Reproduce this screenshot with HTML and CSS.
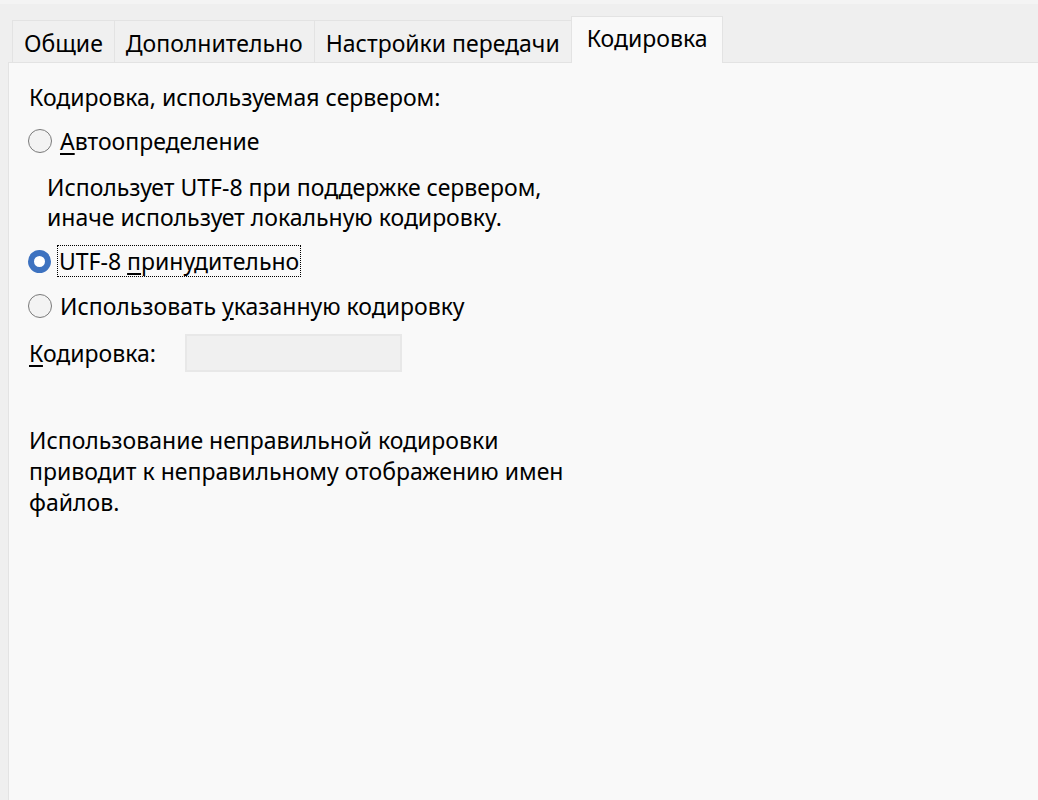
FILE: index.html
```html
<!DOCTYPE html>
<html lang="ru">
<head>
    <meta charset="UTF-8">
    <title>Кодировка</title>
    <link rel="stylesheet" href="styles.css">
</head>
<body>
    <div class="okno">
        <div class="vkladki">
            <div class="vkladka">Общие</div>
            <div class="vkladka">Дополнительно</div>
            <div class="vkladka">Настройки передачи</div>
            <div class="vkladka aktivna">Кодировка</div>
        </div>

        <div class="panel">
            <div class="zagolovok">Кодировка, используемая сервером:</div>

            <label class="radio">
                <span class="krug"></span>
                <span class="tekst"><u>А</u>втоопределение</span>
            </label>
            <div class="opisanie">
                Использует UTF-8 при поддержке сервером,<br>
                иначе использует локальную кодировку.
            </div>

            <label class="radio">
                <span class="krug vybran"></span>
                <span class="tekst fokus">UTF-8 <u>п</u>ринудительно</span>
            </label>

            <label class="radio">
                <span class="krug"></span>
                <span class="tekst">Использовать <u>у</u>казанную кодировку</span>
            </label>

            <div class="stroka">
                <span class="metka"><u>К</u>одировка:</span>
                <div class="pole"></div>
            </div>

            <p class="zamechanie">
                Использование неправильной кодировки<br>
                приводит к неправильному отображению имен<br>
                файлов.
            </p>
        </div>
    </div>
</body>
</html>
```

FILE: styles.css
```css
:root {
    --ramka: #e3e3e3;
    --fon: #efefef;
    --panel: #f9f9f9;
    --text: #000;
    --siniy: #3d72c0;
}

html, body {
    height: 100%;
}

body {
    margin: 0;
    font-family: 'Noto Sans', 'Open Sans', sans-serif;
    font-size: 23px;
    color: var(--text);
    background: var(--fon);
    border-top: 4px solid #f4f4f4;
    box-sizing: border-box;
}

.okno {
    display: flex;
    flex-direction: column;
    height: 100%;
}

.vkladki {
    display: flex;
    align-items: flex-end;
    height: 58px;
    padding-left: 12px;
}

.vkladka {
    height: 41px;
    line-height: 44px;
    padding: 0 11px;
    background: #f0f0f0;
    border: 1px solid var(--ramka);
    border-bottom: none;
    margin-right: -1px;
}

.vkladka.aktivna {
    height: 46px;
    line-height: 42px;
    padding: 0 15px;
    background: var(--panel);
    margin-bottom: -1px;
    position: relative;
    z-index: 1;
}

.panel {
    flex: 1;
    margin-left: 8px;
    background: var(--panel);
    border-top: 1px solid var(--ramka);
    border-left: 1px solid var(--ramka);
    padding: 19px 20px 0;
    line-height: 30px;
}

.radio {
    display: flex;
    align-items: center;
    gap: 6px;
    margin-top: 13px;
    margin-left: -1px;
}

.krug {
    width: 22px;
    height: 22px;
    border: 1.5px solid #7a7a7a;
    border-radius: 50%;
    background: #f3f3f3;
}

.krug.vybran {
    width: 11px;
    height: 11px;
    border: 6.5px solid var(--siniy);
    background: #fff;
}

.tekst {
    padding: 0 1px;
    border: 1px dotted transparent;
}

.tekst.fokus {
    border-color: #000;
}

u {
    text-underline-offset: 3px;
}

.opisanie {
    margin-top: 15px;
    padding-left: 18px;
}

.radio + .radio {
    margin-top: 13px;
}

.opisanie + .radio {
    margin-top: 13px;
}

.stroka {
    display: flex;
    align-items: center;
    margin-top: 12px;
}

.metka {
    width: 156px;
}

.pole {
    width: 213px;
    height: 34px;
    background: #f0f0f0;
    border: 2px solid #e8e8e8;
}

.zamechanie {
    margin: 53px 0 0;
    line-height: 31px;
}
```
